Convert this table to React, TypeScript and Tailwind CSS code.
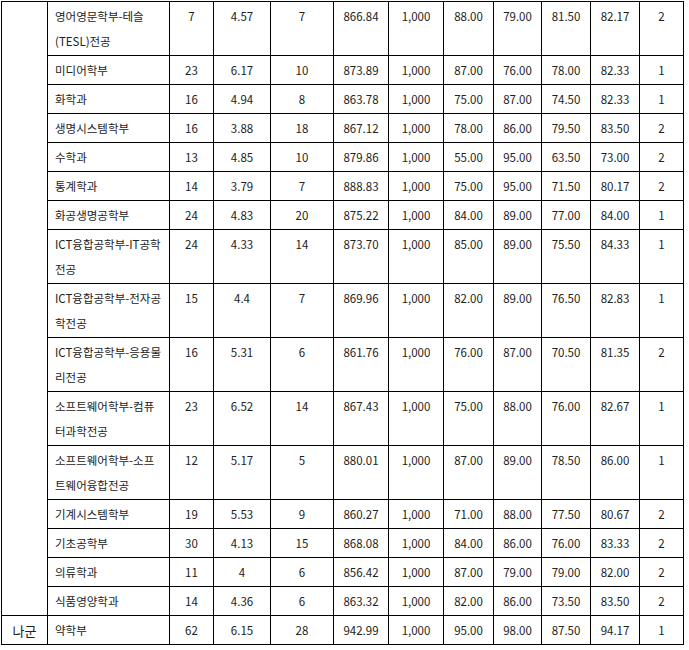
import React from 'react';

type Row = {
    name: string;
    recruit: string;
    rate: string;
    extra: string;
    total: string;
    full: string;
    s1: string;
    s2: string;
    s3: string;
    avg: string;
    grade: string;
};

const ROWS: Row[] = [
    { name: '영어영문학부-테슬(TESL)전공', recruit: '7', rate: '4.57', extra: '7', total: '866.84', full: '1,000', s1: '88.00', s2: '79.00', s3: '81.50', avg: '82.17', grade: '2' },
    { name: '미디어학부', recruit: '23', rate: '6.17', extra: '10', total: '873.89', full: '1,000', s1: '87.00', s2: '76.00', s3: '78.00', avg: '82.33', grade: '1' },
    { name: '화학과', recruit: '16', rate: '4.94', extra: '8', total: '863.78', full: '1,000', s1: '75.00', s2: '87.00', s3: '74.50', avg: '82.33', grade: '1' },
    { name: '생명시스템학부', recruit: '16', rate: '3.88', extra: '18', total: '867.12', full: '1,000', s1: '78.00', s2: '86.00', s3: '79.50', avg: '83.50', grade: '2' },
    { name: '수학과', recruit: '13', rate: '4.85', extra: '10', total: '879.86', full: '1,000', s1: '55.00', s2: '95.00', s3: '63.50', avg: '73.00', grade: '2' },
    { name: '통계학과', recruit: '14', rate: '3.79', extra: '7', total: '888.83', full: '1,000', s1: '75.00', s2: '95.00', s3: '71.50', avg: '80.17', grade: '2' },
    { name: '화공생명공학부', recruit: '24', rate: '4.83', extra: '20', total: '875.22', full: '1,000', s1: '84.00', s2: '89.00', s3: '77.00', avg: '84.00', grade: '1' },
    { name: 'ICT융합공학부-IT공학전공', recruit: '24', rate: '4.33', extra: '14', total: '873.70', full: '1,000', s1: '85.00', s2: '89.00', s3: '75.50', avg: '84.33', grade: '1' },
    { name: 'ICT융합공학부-전자공학전공', recruit: '15', rate: '4.4', extra: '7', total: '869.96', full: '1,000', s1: '82.00', s2: '89.00', s3: '76.50', avg: '82.83', grade: '1' },
    { name: 'ICT융합공학부-응용물리전공', recruit: '16', rate: '5.31', extra: '6', total: '861.76', full: '1,000', s1: '76.00', s2: '87.00', s3: '70.50', avg: '81.35', grade: '2' },
    { name: '소프트웨어학부-컴퓨터과학전공', recruit: '23', rate: '6.52', extra: '14', total: '867.43', full: '1,000', s1: '75.00', s2: '88.00', s3: '76.00', avg: '82.67', grade: '1' },
    { name: '소프트웨어학부-소프트웨어융합전공', recruit: '12', rate: '5.17', extra: '5', total: '880.01', full: '1,000', s1: '87.00', s2: '89.00', s3: '78.50', avg: '86.00', grade: '1' },
    { name: '기계시스템학부', recruit: '19', rate: '5.53', extra: '9', total: '860.27', full: '1,000', s1: '71.00', s2: '88.00', s3: '77.50', avg: '80.67', grade: '2' },
    { name: '기초공학부', recruit: '30', rate: '4.13', extra: '15', total: '868.08', full: '1,000', s1: '84.00', s2: '86.00', s3: '76.00', avg: '83.33', grade: '2' },
    { name: '의류학과', recruit: '11', rate: '4', extra: '6', total: '856.42', full: '1,000', s1: '87.00', s2: '79.00', s3: '79.00', avg: '82.00', grade: '2' },
    { name: '식품영양학과', recruit: '14', rate: '4.36', extra: '6', total: '863.32', full: '1,000', s1: '82.00', s2: '86.00', s3: '73.50', avg: '83.50', grade: '2' },
];

const LAST: Row = { name: '약학부', recruit: '62', rate: '6.15', extra: '28', total: '942.99', full: '1,000', s1: '95.00', s2: '98.00', s3: '87.50', avg: '94.17', grade: '1' };

const COL_WIDTHS = ['w-[46px]', 'w-[122px]', 'w-[44px]', 'w-[57px]', 'w-[63px]', 'w-[55px]', 'w-[55px]', 'w-[50px]', 'w-[48px]', 'w-[49px]', 'w-[49px]', 'w-[44px]'];

const td = 'border border-black align-top pt-[2px] pb-[1px] leading-[25px]';
const num = `${td} text-center px-0`;

const Cells = ({ row }: { row: Row }) => (
    <>
        <td className={`${td} px-[7px] text-left`}>{row.name}</td>
        <td className={num}>{row.recruit}</td>
        <td className={num}>{row.rate}</td>
        <td className={num}>{row.extra}</td>
        <td className={num}>{row.total}</td>
        <td className={num}>{row.full}</td>
        <td className={num}>{row.s1}</td>
        <td className={num}>{row.s2}</td>
        <td className={num}>{row.s3}</td>
        <td className={num}>{row.avg}</td>
        <td className={num}>{row.grade}</td>
    </>
);

export default function App() {
    return (
        <div className="w-[689px] h-[650px] overflow-hidden bg-white pt-[1px] pl-[1px]">
            <table
                className="table-fixed border-collapse w-[683px] text-[11.5px] text-[#222] [font-family:'Noto_Sans_CJK_KR','Noto_Sans',sans-serif]"
            >
                <colgroup>
                    {COL_WIDTHS.map((w, i) => (
                        <col key={i} className={w} />
                    ))}
                </colgroup>
                <tbody>
                    {ROWS.map((row, i) => (
                        <tr key={row.name}>
                            {/* 가군 묶음 칸 (내용은 화면 위쪽) */}
                            {i === 0 && <td rowSpan={ROWS.length} className="border border-black" />}
                            <Cells row={row} />
                        </tr>
                    ))}
                    <tr>
                        <td className="border border-black text-center align-middle text-[13px] leading-[25px] pt-[2px] pb-[1px]">나군</td>
                        <Cells row={LAST} />
                    </tr>
                </tbody>
            </table>
        </div>
    );
}
